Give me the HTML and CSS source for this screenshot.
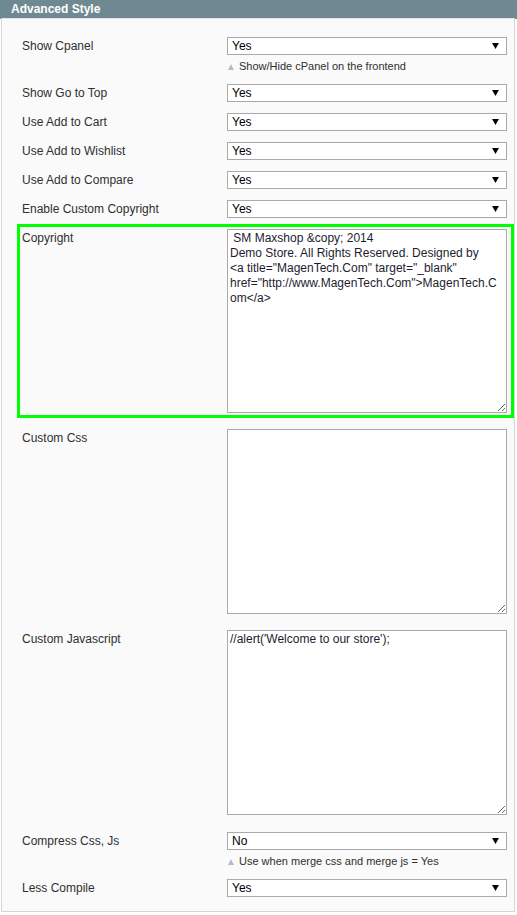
FILE: index.html
```html
<!DOCTYPE html>
<html lang="en">
<head>
  <meta charset="UTF-8">
  <meta name="viewport" content="width=device-width, initial-scale=1.0">
  <title>Advanced Style</title>
  <link rel="stylesheet" href="styles.css">
</head>
<body>
  <div class="section">
    <div class="section-head">Advanced Style</div>
    <div class="fieldset">
      <div class="row">
        <label for="cpanel">Show Cpanel</label>
        <div class="value">
          <select id="cpanel"><option>Yes</option><option>No</option></select>
          <p class="note"><span class="tri"></span>Show/Hide cPanel on the frontend</p>
        </div>
      </div>
      <div class="row">
        <label for="gototop">Show Go to Top</label>
        <div class="value"><select id="gototop"><option>Yes</option><option>No</option></select></div>
      </div>
      <div class="row">
        <label for="addcart">Use Add to Cart</label>
        <div class="value"><select id="addcart"><option>Yes</option><option>No</option></select></div>
      </div>
      <div class="row">
        <label for="addwish">Use Add to Wishlist</label>
        <div class="value"><select id="addwish"><option>Yes</option><option>No</option></select></div>
      </div>
      <div class="row">
        <label for="addcompare">Use Add to Compare</label>
        <div class="value"><select id="addcompare"><option>Yes</option><option>No</option></select></div>
      </div>
      <div class="row">
        <label for="customcopy">Enable Custom Copyright</label>
        <div class="value"><select id="customcopy"><option>Yes</option><option>No</option></select></div>
      </div>
      <div class="row row-highlight">
        <label for="copyright">Copyright</label>
        <div class="value">
          <textarea id="copyright" class="tall-sm"> SM Maxshop &amp;copy; 2014
Demo Store. All Rights Reserved. Designed by
&lt;a title="MagenTech.Com" target="_blank" href="http://www.MagenTech.Com"&gt;MagenTech.Com&lt;/a&gt;</textarea>
        </div>
      </div>
      <div class="row row-area">
        <label for="customcss">Custom Css</label>
        <div class="value"><textarea id="customcss"></textarea></div>
      </div>
      <div class="row row-area row-area-last">
        <label for="customjs">Custom Javascript</label>
        <div class="value"><textarea id="customjs">//alert('Welcome to our store');</textarea></div>
      </div>
      <div class="row">
        <label for="compress">Compress Css, Js</label>
        <div class="value">
          <select id="compress"><option>No</option><option>Yes</option></select>
          <p class="note"><span class="tri"></span>Use when merge css and merge js = Yes</p>
        </div>
      </div>
      <div class="row row-last">
        <label for="lesscompile">Less Compile</label>
        <div class="value"><select id="lesscompile"><option>Yes</option><option>No</option></select></div>
      </div>
    </div>
  </div>
</body>
</html>
```

FILE: styles.css
```css
body {
  margin: 0;
  font-family: Arial, "Liberation Sans", sans-serif;
  font-size: 12px;
  color: #2f2f2f;
  background: #ffffff;
}
.section {
  width: 517px;
}
.section-head {
  height: 19px;
  line-height: 18px;
  padding-left: 11px;
  background-color: #6f8992;
  color: #ffffff;
  font-weight: bold;
  font-size: 12px;
}
.fieldset {
  margin-left: 1px;
  width: 514px;
  box-sizing: border-box;
  display: flex;
  flex-direction: column;
  padding: 18px 0 14px 20px;
  background-color: #fafafa;
  border: 1px solid #d6d6d6;
  border-top: 1px solid #e4e4e4;
  margin-top: -1px;
}
.row {
  display: grid;
  grid-template-columns: 205px 280px;
  margin-bottom: 11px;
}
.row label {
  line-height: 18px;
  color: #2f2f2f;
}
.row select {
  display: block;
  width: 280px;
  height: 18px;
  margin: 0;
  padding: 0 18px 0 4px;
  border: 1px solid #aaaaaa;
  border-radius: 0;
  background: #ffffff url('data:image/svg+xml;charset=US-ASCII,%3Csvg xmlns%3D%22http%3A//www.w3.org/2000/svg%22 viewBox%3D%220 0 8 7%22%3E%3Cpolygon points%3D%220%2C0 8%2C0 4%2C7%22 fill%3D%22%23000%22/%3E%3C/svg%3E') no-repeat right 7px center;
  background-size: 7px 6px;
  appearance: none;
  -webkit-appearance: none;
  font-family: Arial, "Liberation Sans", sans-serif;
  font-size: 12px;
  line-height: 16px;
  color: #000000;
}
.note {
  margin: 4px 0 0 1px;
  height: 14px;
  line-height: 14px;
  font-size: 11px;
  color: #2f2f2f;
}
.tri {
  display: inline-block;
  width: 0;
  height: 0;
  border-left: 3.5px solid transparent;
  border-right: 3.5px solid transparent;
  border-bottom: 6px solid #b4bec2;
  margin-right: 5px;
  vertical-align: 0;
}
.row textarea {
  display: block;
  box-sizing: border-box;
  width: 280px;
  height: 185px;
  margin: 0;
  padding: 1px 5px 1px 2px;
  border: 1px solid #aaaaaa;
  background: #ffffff;
  font-family: Arial, "Liberation Sans", sans-serif;
  font-size: 12px;
  line-height: 15px;
  color: #1d1d2f;
  resize: both;
}
.row textarea.tall-sm {
  height: 184px;
}
.row-highlight {
  margin: -5px 0 11px -5px;
  padding: 2px 1px 2px 2px;
  border: 3px solid #00ff00;
}
.row-area {
  margin-bottom: 16px;
}
.row-area-last {
  margin-bottom: 17px;
}
.row-last {
  margin-bottom: 0;
}
```
